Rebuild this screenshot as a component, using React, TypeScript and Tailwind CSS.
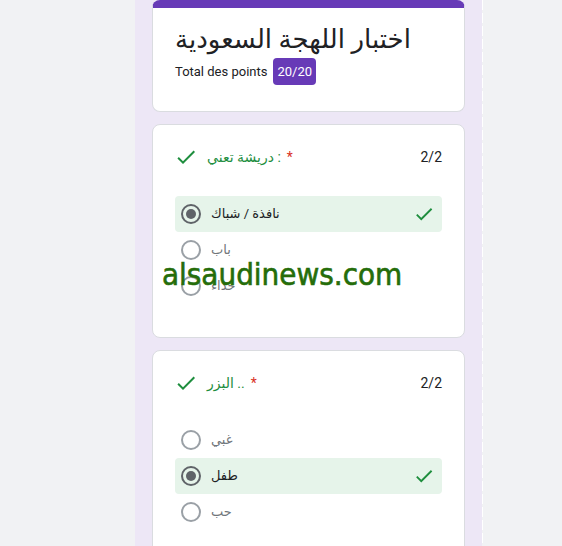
import React from 'react';
import { MdCheck } from 'react-icons/md';

type Option = { label: string; selected?: boolean };

type Question = { title: string; score: string; options: Option[] };

const questions: Question[] = [
  {
    title: 'دريشة تعني :',
    score: '2/2',
    options: [{ label: 'نافذة / شباك', selected: true }, { label: 'باب' }, { label: 'حذاء' }],
  },
  {
    title: 'البزر ..',
    score: '2/2',
    options: [{ label: 'غبي' }, { label: 'طفل', selected: true }, { label: 'حب' }],
  },
];

const Radio: React.FC<{ checked?: boolean }> = ({ checked }) => (
  <div
    className={
      checked
        ? 'w-5 h-5 rounded-full border-2 border-[#5f6368] flex items-center justify-center shrink-0'
        : 'w-5 h-5 rounded-full border-2 border-[#9aa0a6] shrink-0'
    }
  >
    {checked && <div className="w-[10px] h-[10px] rounded-full bg-[#5f6368]" />}
  </div>
);

const QuestionCard: React.FC<{ q: Question }> = ({ q }) => (
  <div className="bg-white rounded-lg border border-[#dadce0] px-[22px] pt-5 pb-[33px]">
    <div className="flex items-center justify-between h-6">
      <div className="flex items-center">
        <MdCheck size={24} className="text-[#1e8e3e] -ml-px" />
        <span className="ml-[9px] text-sm text-[#1e8e3e]">{q.title}</span>
        <span className="ml-[6px] text-sm text-[#d93025]">*</span>
      </div>
      <span className="text-sm text-[#202124]">{q.score}</span>
    </div>
    <div className="mt-[27px] flex flex-col">
      {q.options.map((o) => (
        <div
          key={o.label}
          className={
            o.selected
              ? 'h-9 flex items-center pl-[6px] pr-[7px] rounded bg-[#e6f4ea]'
              : 'h-9 flex items-center pl-[6px] pr-[7px]'
          }
        >
          <Radio checked={o.selected} />
          <span className={o.selected ? 'ml-[10px] text-[13px] text-[#202124]' : 'ml-[10px] text-[13px] text-[#70757a]'}>
            {o.label}
          </span>
          {o.selected && <MdCheck size={22} className="ml-auto text-[#1e8e3e]" />}
        </div>
      ))}
    </div>
  </div>
);

export default function App() {
  return (
    <div className="relative h-screen overflow-hidden bg-[#f1f2f4] font-['Roboto','DejaVu_Sans',sans-serif]">
      <div className="ml-[135px] flex h-full">
        <div className="w-[347px] bg-[#ede7f6] px-[17px] flex flex-col gap-3">
          <div className="bg-white rounded-lg border border-[#dadce0] border-t-8 border-t-[#673ab7] px-[22px] pt-[13px] pb-[26px]">
            <h1 className="text-[26px] leading-[36px] text-[#202124]">اختبار اللهجة السعودية</h1>
            <div className="mt-px flex items-center gap-[6px]">
              <span className="text-[13px] text-[#202124]">Total des points</span>
              <span className="h-[27px] px-[4px] flex items-center rounded-sm bg-[#673ab7] text-[13px] text-white">20/20</span>
            </div>
          </div>
          {questions.map((q) => (
            <QuestionCard key={q.title} q={q} />
          ))}
        </div>
        <div className="w-px bg-[repeating-linear-gradient(to_bottom,#ffffff_0px,#ffffff_10px,transparent_10px,transparent_13px)]" />
      </div>
      <div className="absolute left-[162px] top-[259px] text-[31px] leading-[31px] text-[#256d0a] [-webkit-text-stroke:0.6px_#256d0a] font-['DejaVu_Sans_Condensed','DejaVu_Sans',sans-serif]">
        alsaudinews.com
      </div>
    </div>
  );
}
